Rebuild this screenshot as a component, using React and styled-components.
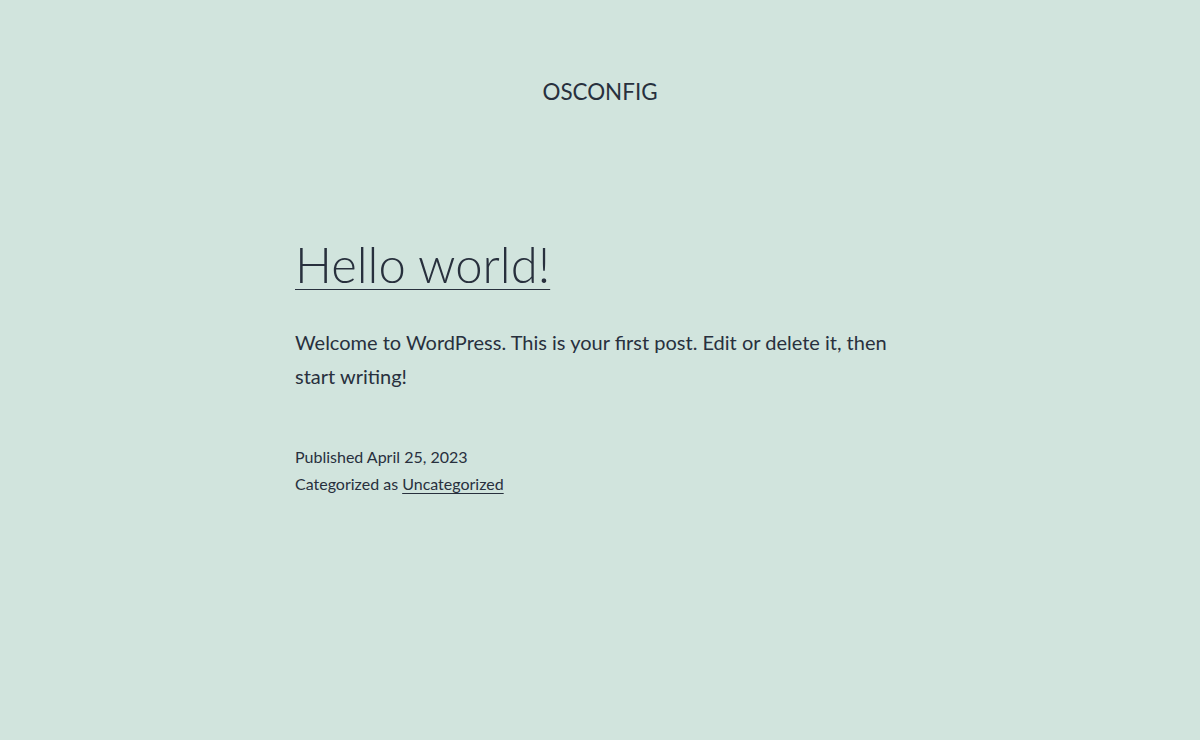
import styled, { createGlobalStyle } from 'styled-components';

const GlobalStyle = createGlobalStyle`
    html, body {
        margin: 0;
        padding: 0;
        background-color: #d1e4dd;
    }

    body {
        color: #28303d;
        font-family: Lato, "Open Sans", sans-serif;
        -webkit-font-smoothing: antialiased;
    }
`;

const Page = styled.div`
    min-height: 740px;
    display: flex;
    flex-direction: column;
    align-items: center;
`;

const SiteHeader = styled.header`
    padding-top: 76px;
    text-align: center;
`;

const SiteTitle = styled.p`
    margin: 0;
    font-size: 22.4px;
    line-height: 31px;
    text-transform: uppercase;
    font-weight: 400;
`;

const Post = styled.article`
    width: 610px;
    margin-top: 126px;
`;

const EntryTitle = styled.h2`
    margin: 0;
    font-size: 49px;
    font-weight: 300;
    line-height: 62px;

    a {
        color: inherit;
        text-decoration: underline;
        text-decoration-thickness: 1px;
        text-underline-offset: 6px;
    }
`;

const EntryContent = styled.div`
    margin-top: 30px;
    font-size: 20px;
    line-height: 34px;

    p {
        margin: 0;
    }
`;

const EntryFooter = styled.footer`
    margin-top: 50px;
    font-size: 16px;
    line-height: 27px;
`;

const MetaLine = styled.div`
    a {
        color: inherit;
        text-decoration: underline;
        text-decoration-thickness: 1px;
        text-underline-offset: 3px;
    }
`;

export default function App() {
    return (
        <>
            <GlobalStyle />
            <Page>
                <SiteHeader>
                    <SiteTitle>osconfig</SiteTitle>
                </SiteHeader>
                <Post>
                    <EntryTitle>
                        <a href="#hello-world">Hello world!</a>
                    </EntryTitle>
                    <EntryContent>
                        <p>Welcome to WordPress. This is your first post. Edit or delete it, then start writing!</p>
                    </EntryContent>
                    <EntryFooter>
                        <MetaLine>Published April 25, 2023</MetaLine>
                        <MetaLine>
                            Categorized as <a href="#uncategorized">Uncategorized</a>
                        </MetaLine>
                    </EntryFooter>
                </Post>
            </Page>
        </>
    );
}
